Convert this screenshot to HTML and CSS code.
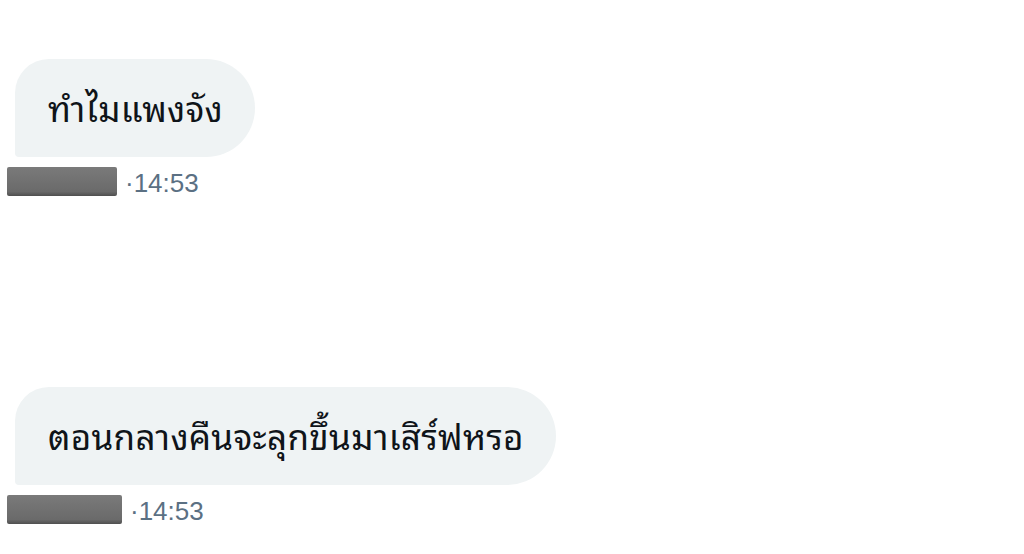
FILE: index.html
```html
<!DOCTYPE html>
<html lang="th">
<head>
<meta charset="utf-8">
<link rel="stylesheet" href="styles.css">
</head>
<body>
<div class="chat">
  <div class="msg">
    <div class="bubble">ทำไมแพงจัง</div>
    <div class="meta"><span class="blur" style="width:110px"></span><span class="time">·14:53</span></div>
  </div>
  <div class="msg">
    <div class="bubble">ตอนกลางคืนจะลุกขึ้นมาเสิร์ฟหรอ</div>
    <div class="meta"><span class="blur" style="width:115px"></span><span class="time">·14:53</span></div>
  </div>
</div>
</body>
</html>
```

FILE: styles.css
```css
html, body {
  margin: 0;
  padding: 0;
  background: #ffffff;
}
.chat {
  display: flex;
  flex-direction: column;
  padding-top: 59px;
  gap: 191px;
}
.msg {
  display: flex;
  flex-direction: column;
  align-items: flex-start;
}
.bubble {
  margin-left: 15px;
  height: 98px;
  box-sizing: border-box;
  display: flex;
  align-items: center;
  padding: 0 32px 4px 33px;
  background: #eff3f4;
  border-radius: 34px 49px 49px 4px;
  font-family: "Noto Sans Thai Looped", "Noto Sans Thai", sans-serif;
  font-size: 35px;
  font-weight: 400;
  letter-spacing: 0.3px;
  color: #0f1419;
}
.meta {
  display: flex;
  align-items: center;
  margin-top: 10px;
  margin-left: 7px;
  height: 29px;
}
.blur {
  display: block;
  height: 29px;
  background: linear-gradient(#7a7a7a, #6a6a6a 85%, #4f4f4f);
  border-radius: 2px;
}
.time {
  margin-left: 8px;
  padding-top: 3px;
  font-family: "Liberation Sans", Arial, sans-serif;
  font-size: 26px;
  color: #5b7083;
}
```
